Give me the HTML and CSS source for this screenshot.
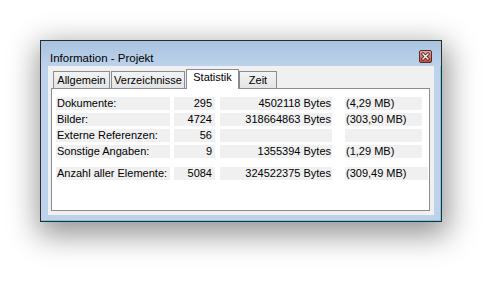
FILE: index.html
```html
<!DOCTYPE html>
<html lang="de">
<head>
  <meta charset="UTF-8" />
  <title>Information - Projekt</title>
  <link rel="stylesheet" href="styles.css">
</head>
<body>

  <div class="window">
    <div class="titlebar">
      <span class="title">Information - Projekt</span>
      <svg class="close" width="13" height="13" viewBox="0 0 13 13">
        <defs>
          <linearGradient id="cg" x1="0" y1="0" x2="0" y2="1">
            <stop offset="0" stop-color="#e8a89c"/>
            <stop offset="1" stop-color="#c2473d"/>
          </linearGradient>
        </defs>
        <rect x="0.5" y="0.5" width="12" height="12" rx="1.5" fill="url(#cg)" stroke="#5a2a28"/>
        <path d="M4 4 L9 9 M9 4 L4 9" stroke="#3a1a18" stroke-width="3" stroke-linecap="square"/>
        <path d="M4 4 L9 9 M9 4 L4 9" stroke="#fff" stroke-width="1.4" stroke-linecap="square"/>
      </svg>
    </div>

    <div class="client">
      <div class="tabs">
        <div class="tab tab-general">Allgemein</div>
        <div class="tab tab-folders">Verzeichnisse</div>
        <div class="tab tab-stats active">Statistik</div>
        <div class="tab tab-time">Zeit</div>
      </div>

      <div class="panel">
        <div class="row">
          <div class="cell c-label">Dokumente:</div>
          <div class="cell c-count">295</div>
          <div class="cell c-bytes">4502118 Bytes</div>
          <div class="cell c-mb">(4,29 MB)</div>
        </div>
        <div class="row">
          <div class="cell c-label">Bilder:</div>
          <div class="cell c-count">4724</div>
          <div class="cell c-bytes">318664863 Bytes</div>
          <div class="cell c-mb">(303,90 MB)</div>
        </div>
        <div class="row">
          <div class="cell c-label">Externe Referenzen:</div>
          <div class="cell c-count">56</div>
          <div class="cell c-bytes"></div>
          <div class="cell c-mb"></div>
        </div>
        <div class="row">
          <div class="cell c-label">Sonstige Angaben:</div>
          <div class="cell c-count">9</div>
          <div class="cell c-bytes">1355394 Bytes</div>
          <div class="cell c-mb">(1,29 MB)</div>
        </div>
        <div class="row total">
          <div class="cell c-label">Anzahl aller Elemente:</div>
          <div class="cell c-count">5084</div>
          <div class="cell c-bytes">324522375 Bytes</div>
          <div class="cell c-mb">(309,49 MB)</div>
        </div>
      </div>
    </div>
  </div>

</body>
</html>
```

FILE: styles.css
```css
html, body {
  margin: 0;
  background: #fff;
}

body {
  min-height: 283px;
  box-sizing: border-box;
  padding: 40px 0 0 40px;
  font-family: "Liberation Sans", Arial, sans-serif;
  color: #000;
}

.window {
  width: 402px;
  box-sizing: border-box;
  border: 1px solid #2c2c2c;
  background: #bed3eb;
  padding: 0 7px 6px 7px;
  box-shadow: inset -1px -1px 0 #66cdee, 2px 9px 28px 4px rgba(0,0,0,0.42);
}

.titlebar {
  height: 25px;
  margin: 0 -7px;
  padding: 9px 9px 0 9px;
  box-sizing: border-box;
  display: flex;
  justify-content: space-between;
  align-items: flex-start;
  background: linear-gradient(#a9c3e0, #bcd2ea);
}

.title {
  font-size: 11.5px;
  line-height: 14px;
  margin-top: 1px;
  color: #000;
}

.close {
  display: block;
}

.client {
  background: #f0f0f0;
  padding: 3px 4px 4px 3px;
}

.tabs {
  display: flex;
  align-items: flex-end;
  height: 19px;
  padding-left: 2px;
}

.tab {
  height: 17px;
  box-sizing: border-box;
  border: 1px solid #898c95;
  border-bottom: none;
  background: linear-gradient(#f3f3f3, #e4e4e4);
  font-size: 11px;
  line-height: 15px;
  padding-top: 1px;
  text-align: center;
  margin-right: 1px;
}

.tab-general { width: 57px; }
.tab-folders { width: 74px; }
.tab-stats { width: 53px; }
.tab-time { width: 38px; margin-left: -1px; }

.tab.active {
  height: 20px;
  margin-bottom: -1px;
  padding-top: 0;
  background: #fff;
  position: relative;
  z-index: 1;
}

.panel {
  height: 123px;
  box-sizing: border-box;
  border: 1px solid #898c95;
  background: #fff;
  padding: 8px 0 0 4px;
}

.row {
  display: flex;
  margin-bottom: 3px;
}

.row.total {
  margin-top: 9px;
}

.cell {
  height: 13px;
  box-sizing: border-box;
  background: #f0f0f0;
  font-size: 11px;
  line-height: 13px;
  white-space: nowrap;
}

.c-label {
  width: 114px;
  padding-left: 1px;
}

.c-count {
  width: 41px;
  margin-left: 4px;
  text-align: right;
  padding-right: 3px;
}

.c-bytes {
  width: 112px;
  margin-left: 5px;
  text-align: right;
  padding-right: 1px;
}

.c-mb {
  width: 77px;
  margin-left: 13px;
  padding-left: 1px;
}

.total .c-mb {
  width: 83px;
}
```
